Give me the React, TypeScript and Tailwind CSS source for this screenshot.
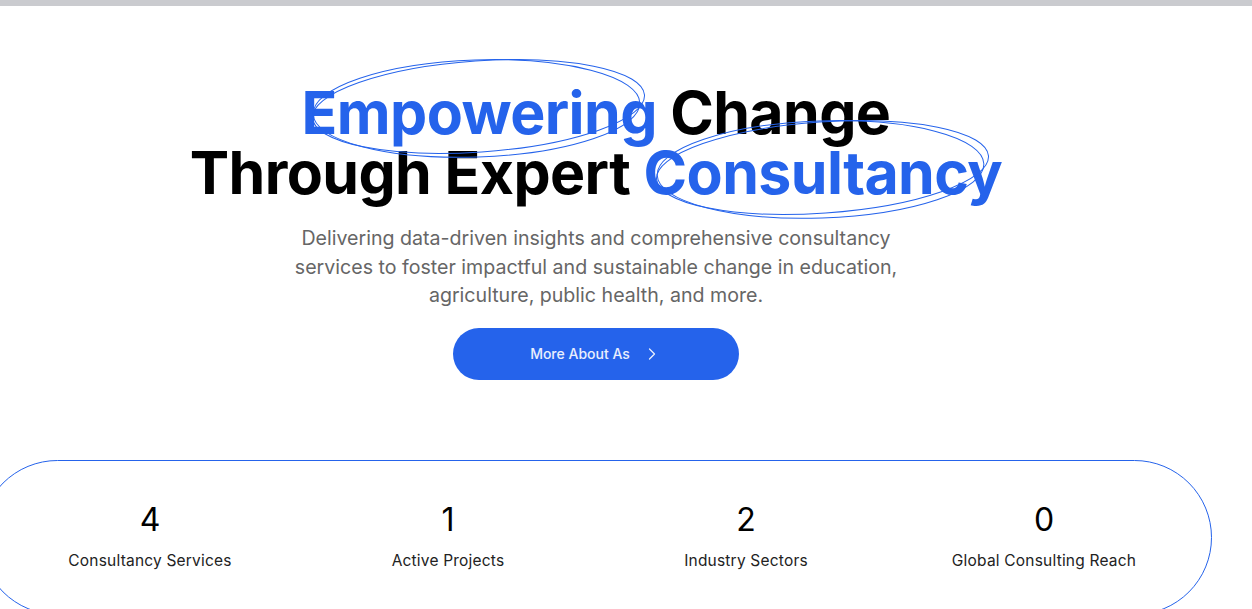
import { ChevronRight } from 'lucide-react';

const stats = [
  { value: '4', label: 'Consultancy Services' },
  { value: '1', label: 'Active Projects' },
  { value: '2', label: 'Industry Sectors' },
  { value: '0', label: 'Global Consulting Reach' },
];

const Scribble = ({ className }: { className: string }) => (
  <svg
    className={className}
    viewBox="0 0 340 104"
    fill="none"
    stroke="#2563eb"
    strokeWidth="1"
    overflow="visible"
  >
    <ellipse cx="170" cy="52" rx="168" ry="46" transform="rotate(-4 170 52)" />
    <ellipse cx="168" cy="54" rx="165" ry="49" transform="rotate(-2 168 54)" />
  </svg>
);

const App = () => {
  return (
    <div className="min-h-screen bg-white overflow-hidden font-['Inter',sans-serif]">
      <div className="h-[6px] bg-[#cacbcf]" />
      <div className="w-[1192px]">
        <section className="flex flex-col items-center pt-[77px]">
          <h1 className="text-center text-[59px] leading-[60px] font-bold text-black tracking-[-0.6px]">
            <span className="relative text-[#2563eb]">
              Empowering
              <Scribble className="absolute left-[8px] top-[-22px] w-[337px] h-[103px] pointer-events-none" />
            </span>{' '}
            Change
            <br />
            Through Expert{' '}
            <span className="relative text-[#2563eb]">
              Consultancy
              <Scribble className="absolute left-[6px] top-[-21px] w-[345px] h-[103px] pointer-events-none" />
            </span>
          </h1>
          <p className="mt-[21px] w-[660px] text-center text-[19.6px] leading-[28.5px] text-[#666]">
            Delivering data-driven insights and comprehensive consultancy
            services to foster impactful and sustainable change in education,
            agriculture, public health, and more.
          </p>
          <button className="mt-[18px] w-[286px] h-[52px] rounded-full bg-[#2563eb] text-white/90 text-[14px] font-medium flex items-center justify-center gap-3">
            More About As
            <ChevronRight size={20} strokeWidth={1.5} />
          </button>
        </section>

        <div className="mt-[80px] -ml-[20px] w-[1232px] h-[155px] rounded-full border border-[#2563eb]">
          <div className="ml-[20px] w-[1192px] grid grid-cols-4 pt-[39px]">
            {stats.map((s) => (
              <div key={s.label} className="flex flex-col items-center">
                <span className="text-[32px] leading-[40px] text-black">
                  {s.value}
                </span>
                <span className="mt-[11px] text-[15.5px] leading-[20px] tracking-[0.2px] text-[#222]">
                  {s.label}
                </span>
              </div>
            ))}
          </div>
        </div>
      </div>
    </div>
  );
};

export default App;
